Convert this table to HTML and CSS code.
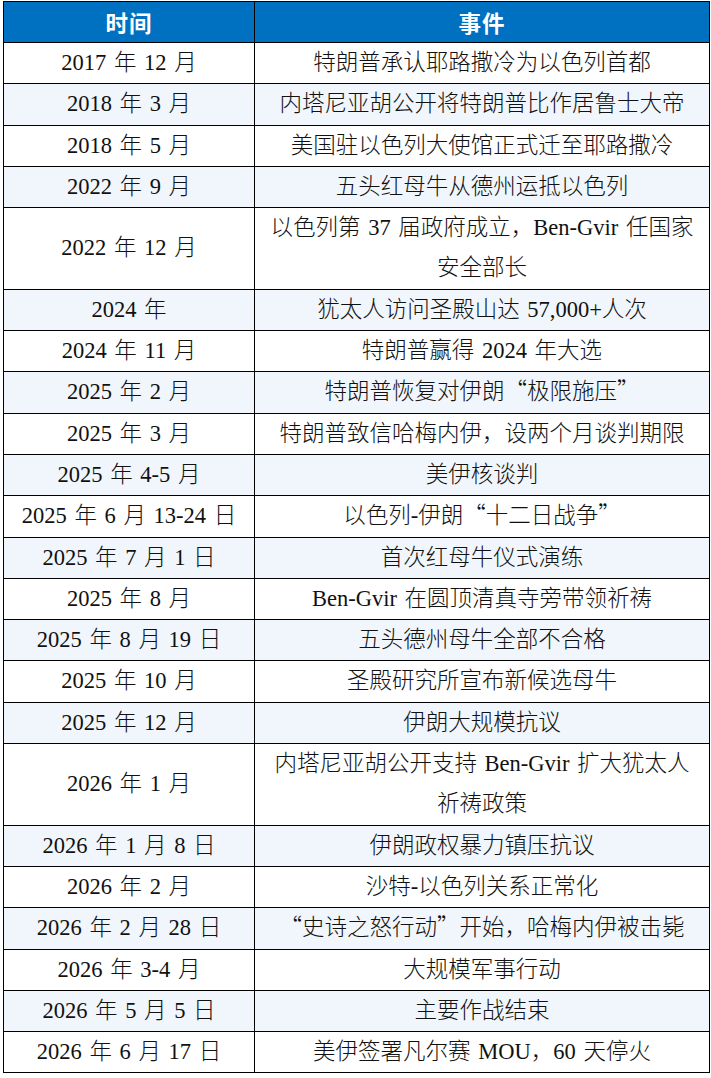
FILE: index.html
```html
<!DOCTYPE html>
<html lang="zh-CN">
<head>
<meta charset="utf-8">
<title>时间线</title>
<link rel="stylesheet" href="styles.css">
</head>
<body>
<table class="timeline">
  <colgroup><col class="c-date"><col class="c-event"></colgroup>
  <thead>
    <tr><th>时间</th><th>事件</th></tr>
  </thead>
  <tbody>
    <tr><td>2017 年 12 月</td><td>特朗普承认耶路撒冷为以色列首都</td></tr>
    <tr><td>2018 年 3 月</td><td>内塔尼亚胡公开将特朗普比作居鲁士大帝</td></tr>
    <tr><td>2018 年 5 月</td><td>美国驻以色列大使馆正式迁至耶路撒冷</td></tr>
    <tr><td>2022 年 9 月</td><td>五头红母牛从德州运抵以色列</td></tr>
    <tr><td>2022 年 12 月</td><td>以色列第 37 届政府成立<span class="cj">，</span>Ben-Gvir 任国家安全部长</td></tr>
    <tr><td>2024 年</td><td>犹太人访问圣殿山达 57,000+人次</td></tr>
    <tr><td>2024 年 11 月</td><td>特朗普赢得 2024 年大选</td></tr>
    <tr><td>2025 年 2 月</td><td>特朗普恢复对伊朗<span class="cj">“</span>极限施压<span class="cj">”</span></td></tr>
    <tr><td>2025 年 3 月</td><td>特朗普致信哈梅内伊<span class="cj">，</span>设两个月谈判期限</td></tr>
    <tr><td>2025 年 4-5 月</td><td>美伊核谈判</td></tr>
    <tr><td>2025 年 6 月 13-24 日</td><td>以色列-伊朗<span class="cj">“</span>十二日战争<span class="cj">”</span></td></tr>
    <tr><td>2025 年 7 月 1 日</td><td>首次红母牛仪式演练</td></tr>
    <tr><td>2025 年 8 月</td><td>Ben-Gvir 在圆顶清真寺旁带领祈祷</td></tr>
    <tr><td>2025 年 8 月 19 日</td><td>五头德州母牛全部不合格</td></tr>
    <tr><td>2025 年 10 月</td><td>圣殿研究所宣布新候选母牛</td></tr>
    <tr><td>2025 年 12 月</td><td>伊朗大规模抗议</td></tr>
    <tr><td>2026 年 1 月</td><td>内塔尼亚胡公开支持 Ben-Gvir 扩大犹太人祈祷政策</td></tr>
    <tr><td>2026 年 1 月 8 日</td><td>伊朗政权暴力镇压抗议</td></tr>
    <tr><td>2026 年 2 月</td><td>沙特-以色列关系正常化</td></tr>
    <tr><td>2026 年 2 月 28 日</td><td><span class="cj">“</span>史诗之怒行动<span class="cj">”</span>开始<span class="cj">，</span>哈梅内伊被击毙</td></tr>
    <tr><td>2026 年 3-4 月</td><td>大规模军事行动</td></tr>
    <tr><td>2026 年 5 月 5 日</td><td>主要作战结束</td></tr>
    <tr><td>2026 年 6 月 17 日</td><td>美伊签署凡尔赛 MOU<span class="cj">，</span>60 天停火</td></tr>
  </tbody>
</table>
</body>
</html>
```

FILE: styles.css
```css
html, body {
  margin: 0;
  padding: 0;
  background: #ffffff;
}

body {
  padding: 1px 0 0 3px;
  font-family: "Liberation Serif", "Noto Sans CJK SC", serif;
  font-size: 22.5px;
  font-weight: 300;
  color: #111111;
}

.cj {
  font-family: "Noto Sans CJK SC", sans-serif;
  line-height: 1;
}

.timeline {
  border-collapse: collapse;
  table-layout: fixed;
  width: 706px;
  word-spacing: 2px;
}

.c-date { width: 251px; }
.c-event { width: 455px; }

.timeline th,
.timeline td {
  border: 1px solid #000000;
  padding: 0 12px;
  text-align: center;
  vertical-align: middle;
  line-height: 40.3px;
}

.timeline th {
  background: #0070c0;
  color: #ffffff;
  font-family: "Noto Sans CJK SC", sans-serif;
  font-weight: 700;
  letter-spacing: 1px;
  height: 40px;
  line-height: 40px;
}

.timeline tbody tr:nth-child(even) td {
  background: #f0f6fb;
}
```
